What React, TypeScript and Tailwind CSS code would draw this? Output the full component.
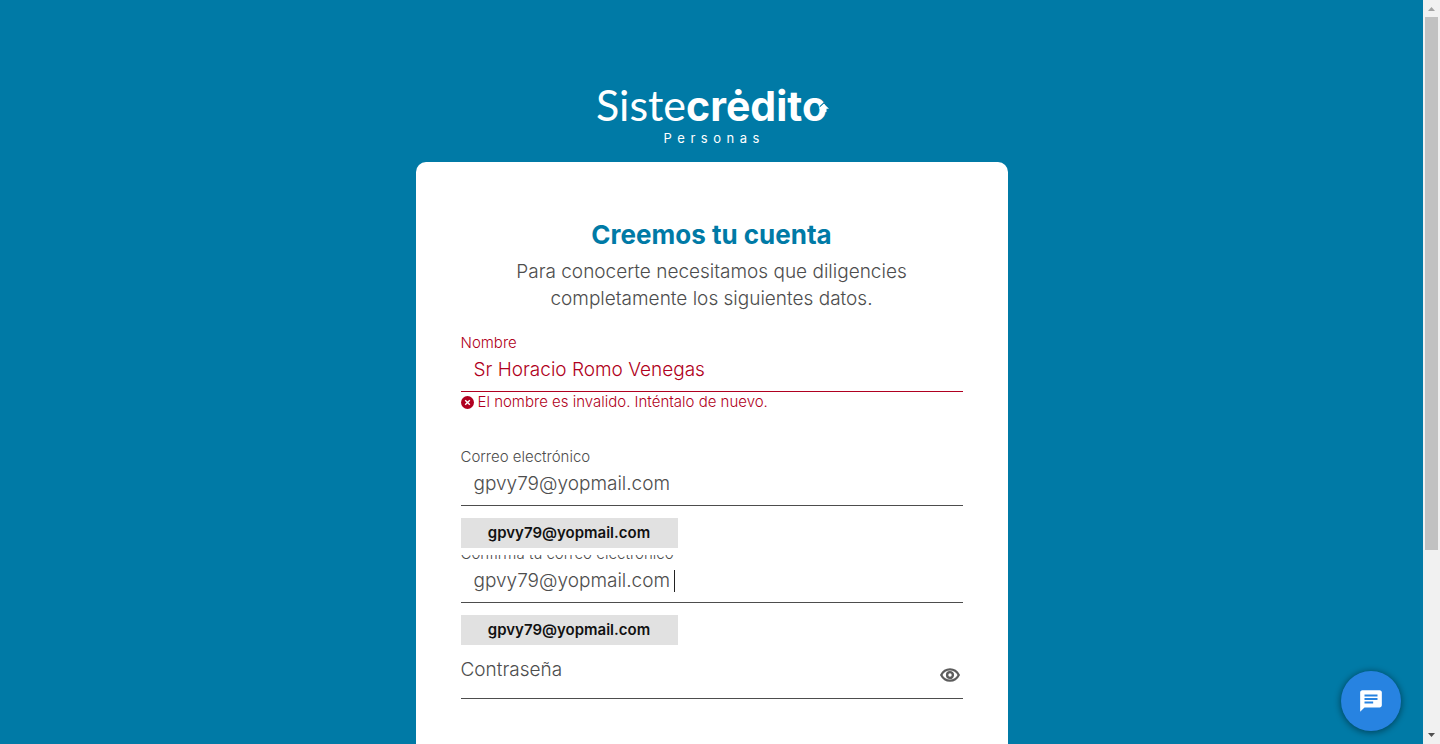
import React from "react";

type FieldProps = {
  id: string;
  label: string;
  value: string;
  type?: string;
  invalid?: boolean;
  focused?: boolean;
  suggestion?: string;
};

function Field({ id, label, value, type = "text", invalid, focused, suggestion }: FieldProps) {
  return (
    <div className={invalid ? "relative text-[#b00020]" : "relative text-[#4d4d4d]"}>
      <label htmlFor={id} className="block h-5 text-[15px] leading-[22px] font-light">
        {label}
      </label>
      <div className="relative">
        <input
          id={id}
          type={type}
          defaultValue={value}
          aria-invalid={invalid}
          className="block h-10 w-full border-b border-current bg-transparent pb-1 pl-[13px] text-[19px] font-light outline-none"
        />
        {focused && <span className="absolute top-[7px] left-[213px] h-[22px] w-px bg-[#222222]" />}
      </div>
      {suggestion && (
        <div className="absolute top-[72px] left-0 z-10 w-[217px] bg-white pb-[7px]">
          <button
            type="button"
            className="block h-[30px] w-full bg-[#e1e1e1] text-center text-[15px] font-semibold text-[#111111]"
          >
            {suggestion}
          </button>
        </div>
      )}
    </div>
  );
}

function Logo() {
  return (
    <div className="flex flex-col items-center text-white">
      <div className="flex h-[49px] items-baseline leading-[48px]">
        <span className="font-['Lato',sans-serif] text-[43px] font-normal">Siste</span>
        <span className="relative text-[41px] font-bold">
          crėdito
          <svg className="absolute right-[-2px] bottom-[18px] h-[10px] w-[10px]" viewBox="0 0 12 12" aria-hidden="true">
            <path d="M1 5.500 L6 1 L11 5.500" fill="none" stroke="#007aa6" strokeWidth="1.300" />
            <path d="M0 8 L6 2.500 L12 8 L9 8 L9 12 L3 12 L3 8 Z" fill="#fff" />
          </svg>
        </span>
      </div>
      <div className="flex w-24 justify-between text-[13px] leading-4 font-normal">
        {"Personas".split("").map((letter, i) => (
          <span key={i}>{letter}</span>
        ))}
      </div>
    </div>
  );
}

export default function App() {
  return (
    <div className="flex h-screen bg-[#007aa6] font-['Inter','Liberation_Sans',sans-serif]">
      <main className="flex-1 overflow-y-auto px-4 pt-[75px] [scrollbar-width:none]">
        <header className="h-[87px] pt-[6px]">
          <Logo />
        </header>
        <section className="mx-auto max-w-[592px] rounded-[10px] bg-white px-[45px] pt-[57px] pb-56">
          <h1 className="text-center text-[26px] leading-8 font-bold text-[#007aa6]">Creemos tu cuenta</h1>
          <p className="mt-[7px] text-center text-[19px] leading-[27px] font-light text-[#4d4d4d]">
            Para conocerte necesitamos que diligencies
            <br />
            completamente los siguientes datos.
          </p>
          <form className="mt-5">
            <Field id="nombre" label="Nombre" value="Sr Horacio Romo Venegas" invalid />
            <p className="flex h-5 items-center gap-1 text-[15px] leading-5 font-light text-[#b00020]">
              <svg className="h-[13px] w-[13px]" viewBox="0 0 13 13" aria-hidden="true">
                <circle cx="6.500" cy="6.500" r="6.500" fill="#b00020" />
                <path d="M4.200 4.200 L8.800 8.800 M8.800 4.200 L4.200 8.800" stroke="#fff" strokeWidth="1.400" />
              </svg>
              El nombre es invalido. Inténtalo de nuevo.
            </p>
            <div className="mt-[34px] flex flex-col gap-[37px]">
              <Field
                id="correo"
                label="Correo electrónico"
                value="gpvy79@yopmail.com"
                type="email"
                suggestion="gpvy79@yopmail.com"
              />
              <Field
                id="confirmar"
                label="Confirma tu correo electrónico"
                value="gpvy79@yopmail.com"
                type="email"
                focused
                suggestion="gpvy79@yopmail.com"
              />
              <div className="relative text-[#4d4d4d]">
                <label htmlFor="clave" className="absolute top-[18px] left-0 text-[19px] leading-6 font-light">
                  Contraseña
                </label>
                <input
                  id="clave"
                  type="password"
                  className="block h-[59px] w-full border-b border-current bg-transparent pt-4 pr-8 outline-none"
                />
                <button type="button" aria-label="Mostrar contraseña" className="absolute top-[25px] right-[3px]">
                  <svg className="h-5 w-5" viewBox="0 0 20 20" fill="none" stroke="#5c5c5c" aria-hidden="true">
                    <path d="M1.200 10 C3.500 5.500 7 4.300 10 4.300 C13 4.300 16.500 5.500 18.800 10 C16.500 14.500 13 15.700 10 15.700 C7 15.700 3.500 14.500 1.200 10 Z" strokeWidth="2.200" />
                    <circle cx="10" cy="10" r="2.900" strokeWidth="2.400" />
                  </svg>
                </button>
              </div>
            </div>
          </form>
        </section>
      </main>

      <div className="flex w-[17px] flex-col items-center bg-[#f1f1f1]" aria-hidden="true">
        <svg className="h-[17px] w-[17px]" viewBox="0 0 17 17">
          <path d="M5 11 L8.500 7 L12 11 Z" fill="#a3a3a3" />
        </svg>
        <div className="flex w-[13px] flex-1 flex-col">
          <div className="h-3/4 bg-[#c1c1c1]" />
        </div>
        <svg className="h-[17px] w-[17px]" viewBox="0 0 17 17">
          <path d="M5 6 L12 6 L8.500 10 Z" fill="#505050" />
        </svg>
      </div>

      <button
        type="button"
        aria-label="Abrir chat"
        className="fixed right-[39px] bottom-[13px] flex h-[60px] w-[60px] items-center justify-center rounded-full bg-[#2783e1] shadow-[0_1px_6px_1px_rgba(0,0,0,0.4)]"
      >
        <svg className="h-[26px] w-[26px]" viewBox="0 0 24 24" fill="#fff" aria-hidden="true">
          <path d="M20 2H4c-1.100 0-2 .9-2 2v18l4-4h14c1.100 0 2-.9 2-2V4c0-1.100-.9-2-2-2zM6 6h12v1.800H6zm0 3.200h12V11H6zm0 3.200h8v1.800H6z" fillRule="evenodd" />
        </svg>
      </button>
    </div>
  );
}
